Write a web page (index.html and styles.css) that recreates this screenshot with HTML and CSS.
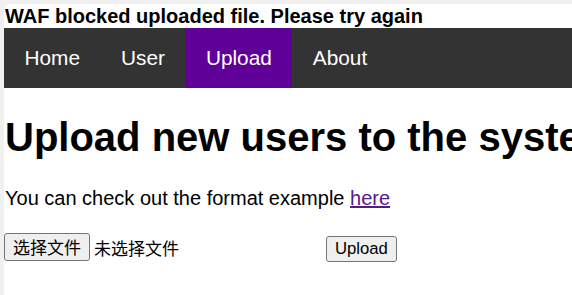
FILE: index.html
```html
<!DOCTYPE html>
<html lang="en">
<head>
  <meta charset="UTF-8">
  <meta name="viewport" content="width=device-width, initial-scale=1.0">
  <title>Upload</title>
  <link rel="stylesheet" href="styles.css">
</head>
<body>
  <div class="page">
    <div class="alert">WAF blocked uploaded file. Please try again</div>

    <ul class="nav">
      <li><a href="#">Home</a></li>
      <li><a href="#">User</a></li>
      <li><a href="#" class="active">Upload</a></li>
      <li><a href="#">About</a></li>
    </ul>

    <h1>Upload new users to the system</h1>

    <p class="hint">You can check out the format example <a href="#" class="visited">here</a></p>

    <form class="upload-form" onsubmit="return false">
      <label class="file-picker">
        <span class="file-btn">选择文件</span>
        <span class="file-name">未选择文件</span>
      </label>
      <button type="submit" class="submit-btn">Upload</button>
    </form>
  </div>
</body>
</html>
```

FILE: styles.css
```css
html {
  background: #f0f0f0;
}
body {
  margin: 0;
  font-family: "Liberation Sans", Arial, "Noto Sans CJK SC", sans-serif;
  color: #000;
}
.page {
  margin: 4px 0 0 4px;
  background: #fff;
  border-top-left-radius: 6px;
  min-height: 291px;
  overflow: hidden;
}
.alert {
  font-weight: bold;
  font-size: 20px;
  line-height: 24px;
  padding-left: 1px;
  white-space: nowrap;
}
.nav {
  list-style: none;
  margin: 0;
  padding: 0;
  display: flex;
  background-color: #333;
}
.nav a {
  display: block;
  color: #fff;
  text-decoration: none;
  font-size: 20.8px;
  line-height: 24px;
  padding: 18px 20.5px;
}
.nav a.active {
  background-color: #5f0098;
}
h1 {
  font-size: 40px;
  margin: 26px 0 0;
  line-height: 46px;
  white-space: nowrap;
  padding-left: 1px;
}
.hint {
  font-size: 20px;
  margin: 26px 0 0;
  line-height: 24px;
  padding-left: 1px;
}
.hint a.visited {
  color: #551a8b;
}
.upload-form {
  display: flex;
  align-items: flex-start;
  margin-top: 23px;
}
.file-picker {
  display: flex;
  align-items: center;
  width: 322px;
  font-size: 17px;
  font-family: "Noto Sans CJK SC", sans-serif;
}
.file-btn,
.submit-btn {
  background: #efefef;
  border: 1px solid #767676;
  border-radius: 3px;
  color: #000;
}
.file-btn {
  font-family: "Noto Sans CJK SC", sans-serif;
  font-size: 17px;
  line-height: 24px;
  padding: 1px 8px;
}
.file-name {
  margin-left: 4px;
}
.submit-btn {
  font-family: "Liberation Sans", Arial, sans-serif;
  font-size: 16.7px;
  line-height: 20px;
  padding: 2px 8px;
  margin-top: 3px;
}
```
